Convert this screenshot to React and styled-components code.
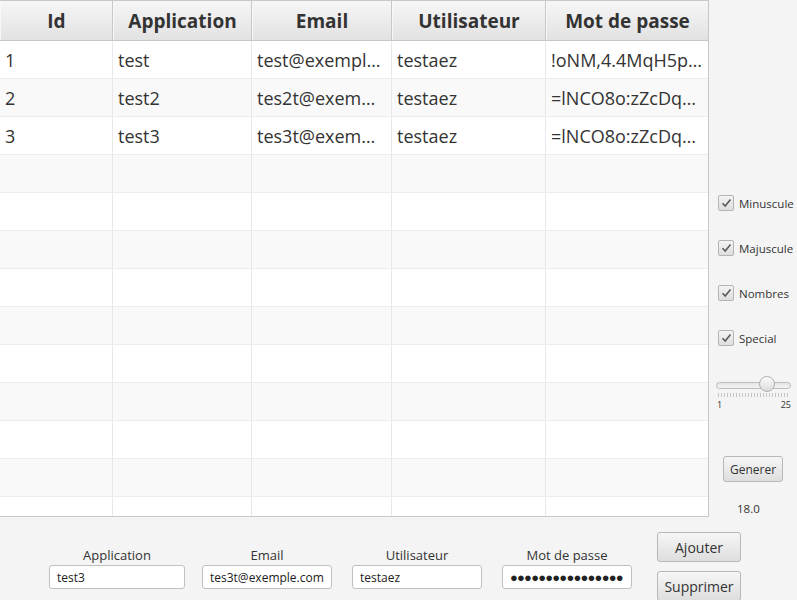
import React from 'react'
import styled, { createGlobalStyle } from 'styled-components'

const GlobalStyle = createGlobalStyle`
  html, body { margin: 0; padding: 0; }
  body {
    font-family: "Open Sans", "Noto Sans", sans-serif;
    background: #f4f4f4;
    color: #333;
  }
`

const COLS = '113px 139px 140px 154px 162px'

const Window = styled.div`
  width: 797px;
  height: 600px;
  display: grid;
  grid-template-rows: 517px 83px;
  overflow: hidden;
  background: #f4f4f4;
`

const Top = styled.div`
  display: grid;
  grid-template-columns: 709px 88px;
`

const Table = styled.div`
  border: 1px solid #c8c8c8;
  border-left: none;
  background: #fff;
  overflow: hidden;
`

const HeaderRow = styled.div`
  display: grid;
  grid-template-columns: ${COLS};
  height: 39px;
  border-bottom: 1px solid #c8c8c8;
`

const HeaderCell = styled.div`
  display: flex;
  align-items: center;
  justify-content: center;
  background: linear-gradient(#f6f6f6, #e2e2e2);
  border-right: 1px solid #c8c8c8;
  border-left: 1px solid #f8f8f8;
  font-weight: 700;
  font-size: 19px;
  color: #333;
  &:last-child { border-right: none; }
`

const Row = styled.div`
  display: grid;
  grid-template-columns: ${COLS};
  height: 38px;
  background: ${p => (p.$odd ? '#f9f9f9' : '#ffffff')};
`

const Cell = styled.div`
  display: flex;
  align-items: center;
  padding: 1px 5px 0;
  border-right: 1px solid #e8e8e8;
  border-bottom: 1px solid #ececec;
  font-size: 18px;
  color: #333;
  min-width: 0;
  &:last-child { border-right: none; }
  span {
    overflow: hidden;
    white-space: nowrap;
    text-overflow: ellipsis;
  }
`

const Side = styled.div`
  display: flex;
  flex-direction: column;
  padding: 195px 0 0 9px;
`

const CheckRow = styled.label`
  display: flex;
  align-items: center;
  gap: 5px;
  height: 16px;
  margin-bottom: 29px;
  font-family: "Open Sans", sans-serif;
  font-size: 11.5px;
  color: #333;
`

const Box = styled.span`
  width: 14px;
  height: 14px;
  border: 1px solid #b4b4b4;
  border-radius: 2px;
  background: linear-gradient(#f4f4f4, #dedede);
  display: flex;
  align-items: center;
  justify-content: center;
`

const SliderWrap = styled.div`
  position: relative;
  width: 75px;
  height: 42px;
  margin: 1px 0 0 -2px;
`

const Track = styled.div`
  position: absolute;
  left: 0;
  right: 0;
  top: 6px;
  height: 5px;
  border: 1px solid #bcbcbc;
  border-radius: 4px;
  background: linear-gradient(#e4e4e4, #f4f4f4);
`

const Thumb = styled.div`
  position: absolute;
  top: 0;
  left: 43px;
  width: 16px;
  height: 16px;
  border-radius: 50%;
  border: 1px solid #b0b0b0;
  background: linear-gradient(#fafafa, #dcdcdc);
  box-sizing: border-box;
`

const Ticks = styled.div`
  position: absolute;
  top: 17px;
  left: 2px;
  right: 2px;
  height: 4px;
  background: repeating-linear-gradient(90deg, #c4c4c4 0 1px, transparent 1px 3px);
`

const TickLabels = styled.div`
  position: absolute;
  top: 22px;
  left: 1px;
  right: 0;
  display: flex;
  justify-content: space-between;
  font-size: 9px;
  color: #333;
`

const Button = styled.button`
  font-family: "Open Sans", sans-serif;
  font-size: ${p => p.$size || 14}px;
  color: #333;
  border: 1px solid #b8b8b8;
  border-radius: 3px;
  background: linear-gradient(#f6f6f6, #dedede);
  padding: 0;
  height: ${p => p.$h || 30}px;
  width: ${p => p.$w || 84}px;
`

const GenButton = styled(Button)`
  margin: 38px 0 0 5px;
`

const Value = styled.div`
  font-size: 11.5px;
  margin: 19px 0 0 19px;
`

const Bottom = styled.div`
  display: flex;
  align-items: flex-start;
  padding: 15px 0 0 49px;
`

const Field = styled.div`
  display: flex;
  flex-direction: column;
  align-items: center;
  width: ${p => p.$w}px;
  margin-right: ${p => p.$mr}px;
  padding-top: 14px;
`

const FieldLabel = styled.div`
  font-size: 13px;
  color: #333;
  height: 19px;
  line-height: 19px;
`

const Input = styled.div`
  width: 100%;
  height: 24px;
  box-sizing: border-box;
  border: 1px solid #c0c0c0;
  border-radius: 3px;
  background: #fff;
  font-size: 12px;
  color: #222;
  display: flex;
  align-items: center;
  padding: 0 7px;
  overflow: hidden;
`

const Dots = styled.span`
  font-size: 13px;
  letter-spacing: -0.8px;
  color: #222;
  white-space: nowrap;
`

const Buttons = styled.div`
  display: flex;
  flex-direction: column;
  gap: 9px;
  margin-left: 25px;
`

const rows = [
  ['1', 'test', 'test@exemple.com', 'testaez', '!oNM,4.4MqH5pX2k'],
  ['2', 'test2', 'tes2t@exemple.com', 'testaez', '=lNCO8o:zZcDq1Rw'],
  ['3', 'test3', 'tes3t@exemple.com', 'testaez', '=lNCO8o:zZcDq1Rw'],
]

const Check = () => (
  <svg width="11" height="10" viewBox="0 0 11 10">
    <path d="M1.5 5.2 L4.2 8 L9.5 1.5" fill="none" stroke="#5a5a5a" strokeWidth="1.6" />
  </svg>
)

const options = ['Minuscule', 'Majuscule', 'Nombres', 'Special']

export default function App() {
  const empty = Array.from({ length: 10 }, () => ['', '', '', '', ''])
  const all = [...rows, ...empty]
  return (
    <>
      <GlobalStyle />
      <Window>
        <Top>
          <Table>
            <HeaderRow>
              {['Id', 'Application', 'Email', 'Utilisateur', 'Mot de passe'].map(h => (
                <HeaderCell key={h}>{h}</HeaderCell>
              ))}
            </HeaderRow>
            {all.map((r, i) => (
              <Row key={i} $odd={i % 2 === 1}>
                {r.map((c, j) => (
                  <Cell key={j}><span>{c}</span></Cell>
                ))}
              </Row>
            ))}
          </Table>
          <Side>
            {options.map(o => (
              <CheckRow key={o}>
                <Box><Check /></Box>
                {o}
              </CheckRow>
            ))}
            <SliderWrap>
              <Track />
              <Thumb />
              <Ticks />
              <TickLabels><span>1</span><span>25</span></TickLabels>
            </SliderWrap>
            <GenButton $w={60} $h={26} $size={12}>Generer</GenButton>
            <Value>18.0</Value>
          </Side>
        </Top>
        <Bottom>
          <Field $w={136} $mr={17}>
            <FieldLabel>Application</FieldLabel>
            <Input>test3</Input>
          </Field>
          <Field $w={130} $mr={20}>
            <FieldLabel>Email</FieldLabel>
            <Input>tes3t@exemple.com</Input>
          </Field>
          <Field $w={130} $mr={20}>
            <FieldLabel>Utilisateur</FieldLabel>
            <Input>testaez</Input>
          </Field>
          <Field $w={130} $mr={0}>
            <FieldLabel>Mot de passe</FieldLabel>
            <Input><Dots>●●●●●●●●●●●●●●●●</Dots></Input>
          </Field>
          <Buttons>
            <Button>Ajouter</Button>
            <Button>Supprimer</Button>
          </Buttons>
        </Bottom>
      </Window>
    </>
  )
}
